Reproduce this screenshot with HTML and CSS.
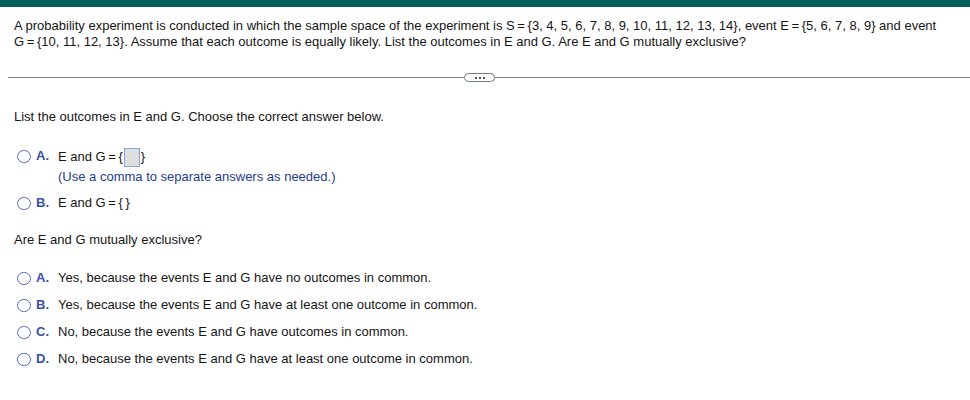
FILE: index.html
```html
<!DOCTYPE html>
<html>
<head>
<meta charset="utf-8">
<link rel="stylesheet" href="styles.css">
</head>
<body>
<div class="topbar"></div>
<div class="question">
  <p class="stem">A probability experiment is conducted in which the sample space of the experiment is S&#8201;=&#8201;{3, 4, 5, 6, 7, 8, 9, 10, 11, 12, 13, 14}, event E&#8201;=&#8201;{5, 6, 7, 8, 9} and event<br>G&#8201;=&#8201;{10, 11, 12, 13}. Assume that each outcome is equally likely. List the outcomes in E and G. Are E and G mutually exclusive?</p>
</div>
<div class="divider">
  <div class="rule left"></div>
  <div class="pill"><span></span><span></span><span></span></div>
  <div class="rule"></div>
</div>
<div class="work">
  <p class="prompt first">List the outcomes in E and G. Choose the correct answer below.</p>
  <div class="choices set1">
    <div class="choice">
      <span class="radio"></span><span class="letter">A.</span>
      <div class="body">
        <div>E and G&#8201;=&#8201;{<span class="box"></span>}</div>
        <div class="hint">(Use a comma to separate answers as needed.)</div>
      </div>
    </div>
    <div class="choice">
      <span class="radio"></span><span class="letter">B.</span>
      <div class="body"><div>E and G&#8201;=&#8201;{&#8201;}</div></div>
    </div>
  </div>
  <p class="prompt second">Are E and G mutually exclusive?</p>
  <div class="choices set2">
    <div class="choice"><span class="radio"></span><span class="letter">A.</span><div class="body">Yes, because the events E and G have no outcomes in common.</div></div>
    <div class="choice"><span class="radio"></span><span class="letter">B.</span><div class="body">Yes, because the events E and G have at least one outcome in common.</div></div>
    <div class="choice"><span class="radio"></span><span class="letter">C.</span><div class="body">No, because the events E and G have outcomes in common.</div></div>
    <div class="choice"><span class="radio"></span><span class="letter">D.</span><div class="body">No, because the events E and G have at least one outcome in common.</div></div>
  </div>
</div>
</body>
</html>
```
FILE: styles.css
```css
html, body {
  margin: 0;
  padding: 0;
  background: #ffffff;
}
body {
  font-family: "Liberation Sans", Arial, sans-serif;
  font-size: 13px;
  color: #151515;
}
.topbar {
  height: 7px;
  background: #03605a;
}
.question {
  padding: 11px 14px 0 14px;
}
.stem {
  margin: 0;
  line-height: 16px;
}
.divider {
  display: flex;
  align-items: center;
  margin: 23px 0 0 8px;
  height: 9px;
}
.rule {
  flex: 1;
  height: 1px;
  background: #7d8593;
}
.rule.left {
  flex: 0 0 456px;
}
.pill {
  width: 29px;
  height: 7px;
  border: 1px solid #6f7888;
  border-radius: 5px;
  display: flex;
  align-items: center;
  justify-content: center;
  gap: 2px;
}
.pill span {
  width: 2px;
  height: 2px;
  background: #4b5565;
}
.work {
  padding: 0 14px;
}
.prompt {
  margin: 0;
  line-height: 16px;
}
.prompt.first {
  margin-top: 27px;
}
.set1 {
  margin-top: 23px;
}
.prompt.second {
  margin-top: 21px;
}
.set2 {
  margin-top: 22px;
}
.choice {
  display: flex;
  align-items: flex-start;
  line-height: 16px;
}
.set1 .choice + .choice {
  margin-top: 10px;
}
.set2 .choice + .choice {
  margin-top: 11px;
}
.radio {
  width: 11.5px;
  height: 11.5px;
  border: 1.3px solid #5468c4;
  border-radius: 50%;
  margin: 1.5px 5.5px 0 3px;
  flex: none;
}
.letter {
  font-weight: bold;
  color: #3b4fa6;
  width: 22px;
  flex: none;
}
.body {
  color: #151515;
}
.hint {
  color: #1f3d8f;
  margin-top: 2px;
}
.box {
  display: inline-block;
  width: 14px;
  height: 17px;
  background: #dedede;
  border: 1px solid #8aa6dc;
  vertical-align: -6px;
  margin: 0 1px;
}
```
